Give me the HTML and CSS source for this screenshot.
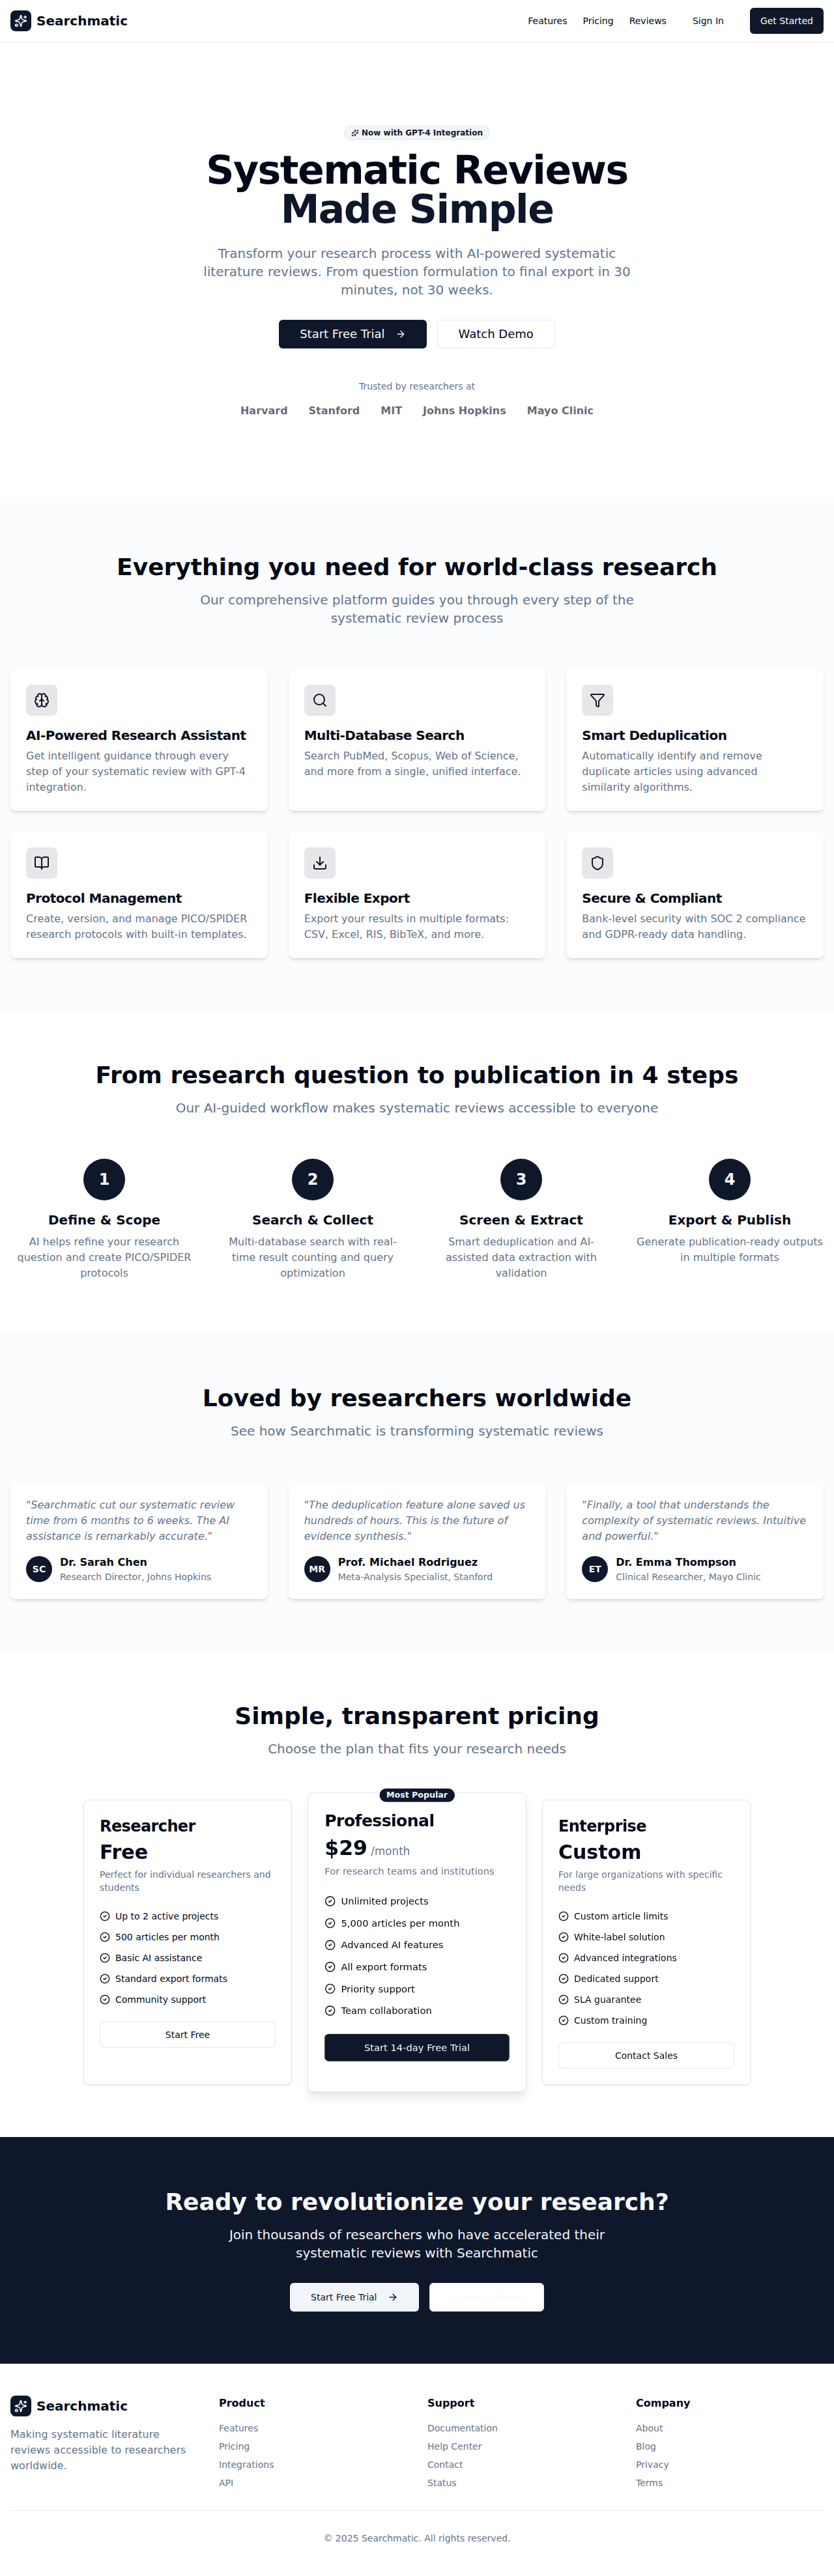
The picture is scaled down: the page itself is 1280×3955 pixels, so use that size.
FILE: index.html
```html
<!DOCTYPE html>
<html lang="en">
<head>
	<meta charset="UTF-8">
	<meta name="viewport" content="width=device-width, initial-scale=1.0">
	<title>Searchmatic - Systematic Reviews Made Simple</title>
	<link rel="stylesheet" href="styles.css">
</head>
<body>
	<svg class="sprite" width="0" height="0" aria-hidden="true">
		<symbol id="i-sparkles" viewBox="0 0 24 24">
			<path d="M9.937 15.5A2 2 0 0 0 8.5 14.063l-6.135-1.582a.5.5 0 0 1 0-.962L8.5 9.936A2 2 0 0 0 9.937 8.5l1.582-6.135a.5.5 0 0 1 .963 0L14.063 8.5A2 2 0 0 0 15.5 9.937l6.135 1.581a.5.5 0 0 1 0 .964L15.5 14.063a2 2 0 0 0-1.437 1.437l-1.582 6.135a.5.5 0 0 1-.963 0z"/>
			<path d="M20 3v4"/><path d="M22 5h-4"/><circle cx="4" cy="20" r="2"/>
		</symbol>
		<symbol id="i-arrow" viewBox="0 0 24 24"><path d="M5 12h14"/><path d="m12 5 7 7-7 7"/></symbol>
		<symbol id="i-check" viewBox="0 0 24 24"><circle cx="12" cy="12" r="10"/><path d="m9 12 2 2 4-4"/></symbol>
		<symbol id="i-brain" viewBox="0 0 24 24">
			<path d="M12 5a3 3 0 1 0-5.997.125 4 4 0 0 0-2.526 5.77 4 4 0 0 0 .556 6.588A4 4 0 1 0 12 18Z"/>
			<path d="M12 5a3 3 0 1 1 5.997.125 4 4 0 0 1 2.526 5.77 4 4 0 0 1-.556 6.588A4 4 0 1 1 12 18Z"/>
			<path d="M15 13a4.5 4.5 0 0 1-3-4 4.5 4.5 0 0 1-3 4"/>
			<path d="M17.599 6.5a3 3 0 0 0 .399-1.375"/><path d="M6.003 5.125A3 3 0 0 0 6.401 6.5"/>
			<path d="M3.477 10.896a4 4 0 0 1 .585-.396"/><path d="M19.938 10.5a4 4 0 0 1 .585.396"/>
			<path d="M6 18a4 4 0 0 1-1.967-.516"/><path d="M19.967 17.484A4 4 0 0 1 18 18"/>
		</symbol>
		<symbol id="i-search" viewBox="0 0 24 24"><circle cx="11" cy="11" r="8"/><path d="m21 21-4.3-4.3"/></symbol>
		<symbol id="i-filter" viewBox="0 0 24 24"><path d="M10 20a1 1 0 0 0 .553.895l2 1A1 1 0 0 0 14 21v-7a2 2 0 0 1 .517-1.341L21.74 4.67A1 1 0 0 0 21 3H3a1 1 0 0 0-.742 1.67l7.225 7.989A2 2 0 0 1 10 14z"/></symbol>
		<symbol id="i-book" viewBox="0 0 24 24"><path d="M12 7v14"/><path d="M3 18a1 1 0 0 1-1-1V4a1 1 0 0 1 1-1h5a4 4 0 0 1 4 4 4 4 0 0 1 4-4h5a1 1 0 0 1 1 1v13a1 1 0 0 1-1 1h-6a3 3 0 0 0-3 3 3 3 0 0 0-3-3z"/></symbol>
		<symbol id="i-download" viewBox="0 0 24 24"><path d="M21 15v4a2 2 0 0 1-2 2H5a2 2 0 0 1-2-2v-4"/><polyline points="7 10 12 15 17 10"/><line x1="12" y1="15" x2="12" y2="3"/></symbol>
		<symbol id="i-shield" viewBox="0 0 24 24"><path d="M20 13c0 5-3.5 7.5-7.66 8.95a1 1 0 0 1-.67-.01C7.5 20.5 4 18 4 13V6a1 1 0 0 1 1-1c2 0 4.5-1.2 6.24-2.72a1.17 1.17 0 0 1 1.52 0C14.51 3.81 17 5 19 5a1 1 0 0 1 1 1z"/></symbol>
	</svg>

	<header class="site-header">
		<div class="container header-row">
			<a class="brand" href="#">
				<span class="brand-mark"><svg class="icon icon-20"><use href="#i-sparkles"/></svg></span>
				<span class="brand-name">Searchmatic</span>
			</a>
			<nav class="nav">
				<a class="nav-link" href="#features">Features</a>
				<a class="nav-link" href="#pricing">Pricing</a>
				<a class="nav-link" href="#reviews">Reviews</a>
				<a class="nav-signin" href="#">Sign In</a>
				<a class="btn btn-primary" href="#">Get Started</a>
			</nav>
		</div>
	</header>

	<main>
		<section class="hero">
			<div class="badge-row">
				<span class="badge"><svg class="icon icon-12"><use href="#i-sparkles"/></svg>Now with GPT-4 Integration</span>
			</div>
			<h1 class="hero-title">
				<span class="hero-line">Systematic Reviews</span>
				<span class="hero-line hero-line-alt">Made Simple</span>
			</h1>
			<p class="lead hero-lead">Transform your research process with AI-powered systematic literature reviews. From question formulation to final export in 30 minutes, not 30 weeks.</p>
			<div class="btn-row">
				<a class="btn btn-primary btn-lg btn-big-text" href="#">Start Free Trial<svg class="icon icon-16 btn-arrow"><use href="#i-arrow"/></svg></a>
				<a class="btn btn-outline btn-lg btn-big-text" href="#">Watch Demo</a>
			</div>
			<p class="trusted">Trusted by researchers at</p>
			<div class="trusted-logos">
				<span>Harvard</span>
				<span>Stanford</span>
				<span>MIT</span>
				<span>Johns Hopkins</span>
				<span>Mayo Clinic</span>
			</div>
		</section>

		<section class="section section-tint" id="features">
			<div class="container">
				<div class="section-head">
					<h2 class="section-title">Everything you need for world-class research</h2>
					<p class="lead lead-wide">Our comprehensive platform guides you through every step of the systematic review process</p>
				</div>
				<div class="grid-3">
					<article class="card">
						<div class="feature-icon"><svg class="icon icon-24"><use href="#i-brain"/></svg></div>
						<h3 class="card-title">AI-Powered Research Assistant</h3>
						<p class="card-text">Get intelligent guidance through every step of your systematic review with GPT-4 integration.</p>
					</article>
					<article class="card">
						<div class="feature-icon"><svg class="icon icon-24"><use href="#i-search"/></svg></div>
						<h3 class="card-title">Multi-Database Search</h3>
						<p class="card-text">Search PubMed, Scopus, Web of Science, and more from a single, unified interface.</p>
					</article>
					<article class="card">
						<div class="feature-icon"><svg class="icon icon-24"><use href="#i-filter"/></svg></div>
						<h3 class="card-title">Smart Deduplication</h3>
						<p class="card-text">Automatically identify and remove duplicate articles using advanced similarity algorithms.</p>
					</article>
					<article class="card">
						<div class="feature-icon"><svg class="icon icon-24"><use href="#i-book"/></svg></div>
						<h3 class="card-title">Protocol Management</h3>
						<p class="card-text">Create, version, and manage PICO/SPIDER research protocols with built-in templates.</p>
					</article>
					<article class="card">
						<div class="feature-icon"><svg class="icon icon-24"><use href="#i-download"/></svg></div>
						<h3 class="card-title">Flexible Export</h3>
						<p class="card-text">Export your results in multiple formats: CSV, Excel, RIS, BibTeX, and more.</p>
					</article>
					<article class="card">
						<div class="feature-icon"><svg class="icon icon-24"><use href="#i-shield"/></svg></div>
						<h3 class="card-title">Secure &amp; Compliant</h3>
						<p class="card-text">Bank-level security with SOC 2 compliance and GDPR-ready data handling.</p>
					</article>
				</div>
			</div>
		</section>

		<section class="section">
			<div class="container">
				<div class="section-head">
					<h2 class="section-title">From research question to publication in 4 steps</h2>
					<p class="lead lead-wide">Our AI-guided workflow makes systematic reviews accessible to everyone</p>
				</div>
				<div class="steps">
					<div class="step">
						<div class="step-num">1</div>
						<h3 class="step-title">Define &amp; Scope</h3>
						<p class="card-text">AI helps refine your research question and create PICO/SPIDER protocols</p>
					</div>
					<div class="step">
						<div class="step-num">2</div>
						<h3 class="step-title">Search &amp; Collect</h3>
						<p class="card-text">Multi-database search with real-time result counting and query optimization</p>
					</div>
					<div class="step">
						<div class="step-num">3</div>
						<h3 class="step-title">Screen &amp; Extract</h3>
						<p class="card-text">Smart deduplication and AI-assisted data extraction with validation</p>
					</div>
					<div class="step">
						<div class="step-num">4</div>
						<h3 class="step-title">Export &amp; Publish</h3>
						<p class="card-text">Generate publication-ready outputs in multiple formats</p>
					</div>
				</div>
			</div>
		</section>

		<section class="section section-tint" id="reviews">
			<div class="container">
				<div class="section-head">
					<h2 class="section-title">Loved by researchers worldwide</h2>
					<p class="lead lead-wide">See how Searchmatic is transforming systematic reviews</p>
				</div>
				<div class="grid-3">
					<article class="card">
						<p class="quote">"Searchmatic cut our systematic review time from 6 months to 6 weeks. The AI assistance is remarkably accurate."</p>
						<div class="person">
							<span class="avatar">SC</span>
							<div>
								<div class="person-name">Dr. Sarah Chen</div>
								<div class="person-role">Research Director, Johns Hopkins</div>
							</div>
						</div>
					</article>
					<article class="card">
						<p class="quote">"The deduplication feature alone saved us hundreds of hours. This is the future of evidence synthesis."</p>
						<div class="person">
							<span class="avatar">MR</span>
							<div>
								<div class="person-name">Prof. Michael Rodriguez</div>
								<div class="person-role">Meta-Analysis Specialist, Stanford</div>
							</div>
						</div>
					</article>
					<article class="card">
						<p class="quote">"Finally, a tool that understands the complexity of systematic reviews. Intuitive and powerful."</p>
						<div class="person">
							<span class="avatar">ET</span>
							<div>
								<div class="person-name">Dr. Emma Thompson</div>
								<div class="person-role">Clinical Researcher, Mayo Clinic</div>
							</div>
						</div>
					</article>
				</div>
			</div>
		</section>

		<section class="section" id="pricing">
			<div class="container">
				<div class="section-head">
					<h2 class="section-title">Simple, transparent pricing</h2>
					<p class="lead lead-wide">Choose the plan that fits your research needs</p>
				</div>
				<div class="plans">
					<article class="plan">
						<h3 class="plan-name">Researcher</h3>
						<div class="plan-price">Free</div>
						<p class="plan-text">Perfect for individual researchers and students</p>
						<ul class="plan-list">
							<li><svg class="icon icon-16"><use href="#i-check"/></svg>Up to 2 active projects</li>
							<li><svg class="icon icon-16"><use href="#i-check"/></svg>500 articles per month</li>
							<li><svg class="icon icon-16"><use href="#i-check"/></svg>Basic AI assistance</li>
							<li><svg class="icon icon-16"><use href="#i-check"/></svg>Standard export formats</li>
							<li><svg class="icon icon-16"><use href="#i-check"/></svg>Community support</li>
						</ul>
						<a class="btn btn-outline btn-block" href="#">Start Free</a>
					</article>
					<article class="plan plan-featured">
						<span class="plan-tag">Most Popular</span>
						<h3 class="plan-name">Professional</h3>
						<div class="plan-price">$29<span class="plan-period">/month</span></div>
						<p class="plan-text">For research teams and institutions</p>
						<ul class="plan-list">
							<li><svg class="icon icon-16"><use href="#i-check"/></svg>Unlimited projects</li>
							<li><svg class="icon icon-16"><use href="#i-check"/></svg>5,000 articles per month</li>
							<li><svg class="icon icon-16"><use href="#i-check"/></svg>Advanced AI features</li>
							<li><svg class="icon icon-16"><use href="#i-check"/></svg>All export formats</li>
							<li><svg class="icon icon-16"><use href="#i-check"/></svg>Priority support</li>
							<li><svg class="icon icon-16"><use href="#i-check"/></svg>Team collaboration</li>
						</ul>
						<a class="btn btn-primary btn-block" href="#">Start 14-day Free Trial</a>
					</article>
					<article class="plan">
						<h3 class="plan-name">Enterprise</h3>
						<div class="plan-price">Custom</div>
						<p class="plan-text">For large organizations with specific needs</p>
						<ul class="plan-list">
							<li><svg class="icon icon-16"><use href="#i-check"/></svg>Custom article limits</li>
							<li><svg class="icon icon-16"><use href="#i-check"/></svg>White-label solution</li>
							<li><svg class="icon icon-16"><use href="#i-check"/></svg>Advanced integrations</li>
							<li><svg class="icon icon-16"><use href="#i-check"/></svg>Dedicated support</li>
							<li><svg class="icon icon-16"><use href="#i-check"/></svg>SLA guarantee</li>
							<li><svg class="icon icon-16"><use href="#i-check"/></svg>Custom training</li>
						</ul>
						<a class="btn btn-outline btn-block" href="#">Contact Sales</a>
					</article>
				</div>
			</div>
		</section>

		<section class="cta">
			<h2 class="section-title cta-title">Ready to revolutionize your research?</h2>
			<p class="lead cta-lead">Join thousands of researchers who have accelerated their systematic reviews with Searchmatic</p>
			<div class="btn-row">
				<a class="btn btn-light btn-lg" href="#">Start Free Trial<svg class="icon icon-16 btn-arrow"><use href="#i-arrow"/></svg></a>
				<a class="btn btn-ghost-white btn-lg" href="#">Schedule Demo</a>
			</div>
		</section>
	</main>

	<footer class="site-footer">
		<div class="container">
			<div class="footer-grid">
				<div>
					<a class="brand footer-brand" href="#">
						<span class="brand-mark"><svg class="icon icon-20"><use href="#i-sparkles"/></svg></span>
						<span class="brand-name">Searchmatic</span>
					</a>
					<p class="footer-about">Making systematic literature reviews accessible to researchers worldwide.</p>
				</div>
				<div>
					<h4 class="footer-head">Product</h4>
					<ul class="footer-links">
						<li><a href="#">Features</a></li>
						<li><a href="#">Pricing</a></li>
						<li><a href="#">Integrations</a></li>
						<li><a href="#">API</a></li>
					</ul>
				</div>
				<div>
					<h4 class="footer-head">Support</h4>
					<ul class="footer-links">
						<li><a href="#">Documentation</a></li>
						<li><a href="#">Help Center</a></li>
						<li><a href="#">Contact</a></li>
						<li><a href="#">Status</a></li>
					</ul>
				</div>
				<div>
					<h4 class="footer-head">Company</h4>
					<ul class="footer-links">
						<li><a href="#">About</a></li>
						<li><a href="#">Blog</a></li>
						<li><a href="#">Privacy</a></li>
						<li><a href="#">Terms</a></li>
					</ul>
				</div>
			</div>
			<p class="footer-bottom">© 2025 Searchmatic. All rights reserved.</p>
		</div>
	</footer>
</body>
</html>
```

FILE: styles.css
```css
* {
	box-sizing: border-box;
}

body {
	margin: 0;
	background: #fff;
	color: #020817;
	font-family: "DejaVu Sans", sans-serif;
	font-size: 16px;
	line-height: 24px;
}

a {
	color: inherit;
	text-decoration: none;
}

h1, h2, h3, h4, p, ul {
	margin: 0;
	padding: 0;
}

ul {
	list-style: none;
}

.sprite {
	position: absolute;
}

.container {
	padding: 0 16px;
}

.icon {
	display: block;
	flex: none;
	fill: none;
	stroke: currentColor;
	stroke-width: 2;
	stroke-linecap: round;
	stroke-linejoin: round;
}

.icon-12 { width: 12px; height: 12px; }
.icon-16 { width: 16px; height: 16px; }
.icon-20 { width: 20px; height: 20px; }
.icon-24 { width: 24px; height: 24px; }

/* header */
.site-header {
	border-bottom: 1px solid #e2e8f0;
	background: #fff;
}

.header-row {
	display: flex;
	align-items: center;
	justify-content: space-between;
	height: 64px;
}

.brand {
	display: flex;
	align-items: center;
	gap: 8px;
}

.brand-mark {
	display: flex;
	align-items: center;
	justify-content: center;
	width: 32px;
	height: 32px;
	border-radius: 8px;
	background: #0f172a;
	color: #f8fafc;
}

.brand-name {
	font-size: 20px;
	line-height: 28px;
	font-weight: 700;
}

.nav {
	display: flex;
	align-items: center;
	gap: 24px;
	font-size: 14px;
	line-height: 20px;
}

.nav-signin {
	padding: 0 16px;
}

/* buttons */
.btn {
	display: inline-flex;
	align-items: center;
	justify-content: center;
	height: 40px;
	padding: 0 16px;
	border-radius: 6px;
	font-size: 14px;
	line-height: 20px;
}

.btn-lg {
	height: 44px;
	padding: 0 32px;
}

.btn-big-text {
	font-size: 18px;
	line-height: 28px;
}

.btn-block {
	display: flex;
	width: 100%;
}

.btn-primary {
	background: #0f172a;
	color: #f8fafc;
}

.btn-outline {
	border: 1px solid #e2e8f0;
	background: #fff;
	color: #020817;
}

.btn-light {
	background: #f1f5f9;
	color: #0f172a;
}

.btn-ghost-white {
	border: 1px solid #e2e8f0;
	background: #fff;
	color: #f8fafc;
}

.btn-arrow {
	margin-left: 16px;
}

.btn-row {
	display: flex;
	justify-content: center;
	gap: 16px;
}

/* hero */
.hero {
	padding: 128px 16px;
	text-align: center;
}

.badge-row {
	display: flex;
	justify-content: center;
	margin-bottom: 16px;
}

.badge {
	display: inline-flex;
	align-items: center;
	gap: 4px;
	padding: 2px 10px;
	border: 1px solid #e2e8f0;
	border-radius: 999px;
	background: #f1f5f9;
	color: #0f172a;
	font-size: 12px;
	line-height: 16px;
	font-weight: 700;
}

.hero-title {
	margin-bottom: 24px;
	font-size: 60px;
	line-height: 60px;
	font-weight: 700;
	letter-spacing: -1.5px;
}

.hero-line {
	display: block;
}

.hero-line-alt {
	color: #0f172a;
}

.lead {
	max-width: 672px;
	margin: 0 auto;
	color: #64748b;
	font-size: 20px;
	line-height: 28px;
}

.lead-wide {
	max-width: 768px;
}

.hero-lead {
	margin-bottom: 32px;
}

.trusted {
	margin-top: 48px;
	color: #64748b;
	font-size: 14px;
	line-height: 20px;
}

.trusted-logos {
	display: flex;
	justify-content: center;
	gap: 32px;
	margin-top: 16px;
	font-weight: 700;
	opacity: .6;
}

/* sections */
.section {
	padding: 80px 0;
}

.section-tint {
	background: #fbfcfd;
}

.section-head {
	margin-bottom: 64px;
	text-align: center;
}

.section-title {
	margin-bottom: 16px;
	font-size: 36px;
	line-height: 40px;
	font-weight: 700;
}

.grid-3 {
	display: grid;
	grid-template-columns: repeat(3, 1fr);
	gap: 32px;
}

.card {
	padding: 24px;
	border-radius: 8px;
	background: #fff;
	box-shadow: 0 4px 6px -1px rgba(0,0,0,.1), 0 2px 4px -2px rgba(0,0,0,.1);
}

.feature-icon {
	display: flex;
	align-items: center;
	justify-content: center;
	width: 48px;
	height: 48px;
	margin-bottom: 16px;
	border-radius: 8px;
	background: rgba(15,23,42,.1);
	color: #0f172a;
}

.card-title {
	margin-bottom: 6px;
	font-size: 20px;
	line-height: 28px;
	font-weight: 700;
	letter-spacing: -.5px;
}

.card-text {
	color: #64748b;
}

/* steps */
.steps {
	display: grid;
	grid-template-columns: repeat(4, 1fr);
	gap: 32px;
	text-align: center;
}

.step-num {
	display: flex;
	align-items: center;
	justify-content: center;
	width: 64px;
	height: 64px;
	margin: 0 auto 16px;
	border-radius: 50%;
	background: #0f172a;
	color: #f8fafc;
	font-size: 24px;
	font-weight: 700;
}

.step-title {
	margin-bottom: 8px;
	font-size: 20px;
	line-height: 28px;
	font-weight: 700;
}

/* testimonials */
.quote {
	margin-bottom: 16px;
	color: #64748b;
	font-style: italic;
}

.person {
	display: flex;
	align-items: center;
	gap: 12px;
}

.avatar {
	display: flex;
	align-items: center;
	justify-content: center;
	flex: none;
	width: 40px;
	height: 40px;
	border-radius: 50%;
	background: #0f172a;
	color: #f8fafc;
	font-size: 14px;
	font-weight: 700;
}

.person-name {
	font-weight: 700;
}

.person-role {
	color: #64748b;
	font-size: 14px;
	line-height: 20px;
}

/* pricing */
.plans {
	display: grid;
	grid-template-columns: repeat(3, 1fr);
	gap: 32px;
	max-width: 1024px;
	margin: 0 auto;
}

.plan {
	position: relative;
	padding: 24px;
	border: 1px solid #e2e8f0;
	border-radius: 8px;
	background: #fff;
	box-shadow: 0 1px 2px 0 rgba(0,0,0,.05), 0 1px 3px rgba(0,0,0,.06);
}

.plan-featured {
	transform: scale(1.05);
	box-shadow: 0 10px 15px -3px rgba(0,0,0,.1), 0 4px 6px -4px rgba(0,0,0,.1);
}

.plan-tag {
	position: absolute;
	top: -7px;
	left: 50%;
	transform: translateX(-50%);
	padding: 2px 10px;
	border-radius: 999px;
	background: #0f172a;
	color: #f8fafc;
	font-size: 12px;
	line-height: 16px;
	font-weight: 700;
	white-space: nowrap;
}

.plan-name {
	margin-bottom: 6px;
	font-size: 24px;
	line-height: 32px;
	font-weight: 700;
	letter-spacing: -.6px;
}

.plan-price {
	margin-bottom: 6px;
	font-size: 30px;
	line-height: 36px;
	font-weight: 700;
}

.plan-period {
	margin-left: 5px;
	color: #64748b;
	font-size: 16px;
	line-height: 1;
	font-weight: 400;
}

.plan-text {
	margin-bottom: 24px;
	color: #64748b;
	font-size: 14px;
	line-height: 20px;
}

.plan-list {
	margin-bottom: 24px;
	font-size: 14px;
	line-height: 20px;
}

.plan-list li {
	display: flex;
	align-items: center;
	gap: 8px;
	margin-bottom: 12px;
}

.plan-list li:last-child {
	margin-bottom: 0;
}

/* cta */
.cta {
	padding: 80px 16px;
	background: #0f172a;
	text-align: center;
}

.cta-title {
	color: #f8fafc;
}

.cta-lead {
	margin-bottom: 32px;
	color: #f1f5f9;
}

/* footer */
.site-footer {
	padding: 48px 0;
	border-top: 1px solid #e2e8f0;
}

.footer-grid {
	display: grid;
	grid-template-columns: repeat(4, 1fr);
	gap: 32px;
}

.footer-brand {
	margin-bottom: 16px;
}

.footer-about {
	color: #64748b;
}

.footer-head {
	margin-bottom: 16px;
	font-size: 16px;
	font-weight: 700;
}

.footer-links {
	color: #64748b;
	font-size: 14px;
	line-height: 20px;
}

.footer-links li {
	margin-bottom: 8px;
}

.footer-links li:last-child {
	margin-bottom: 0;
}

.footer-bottom {
	margin-top: 32px;
	padding-top: 32px;
	border-top: 1px solid #e2e8f0;
	color: #64748b;
	font-size: 14px;
	line-height: 20px;
	text-align: center;
}
```
